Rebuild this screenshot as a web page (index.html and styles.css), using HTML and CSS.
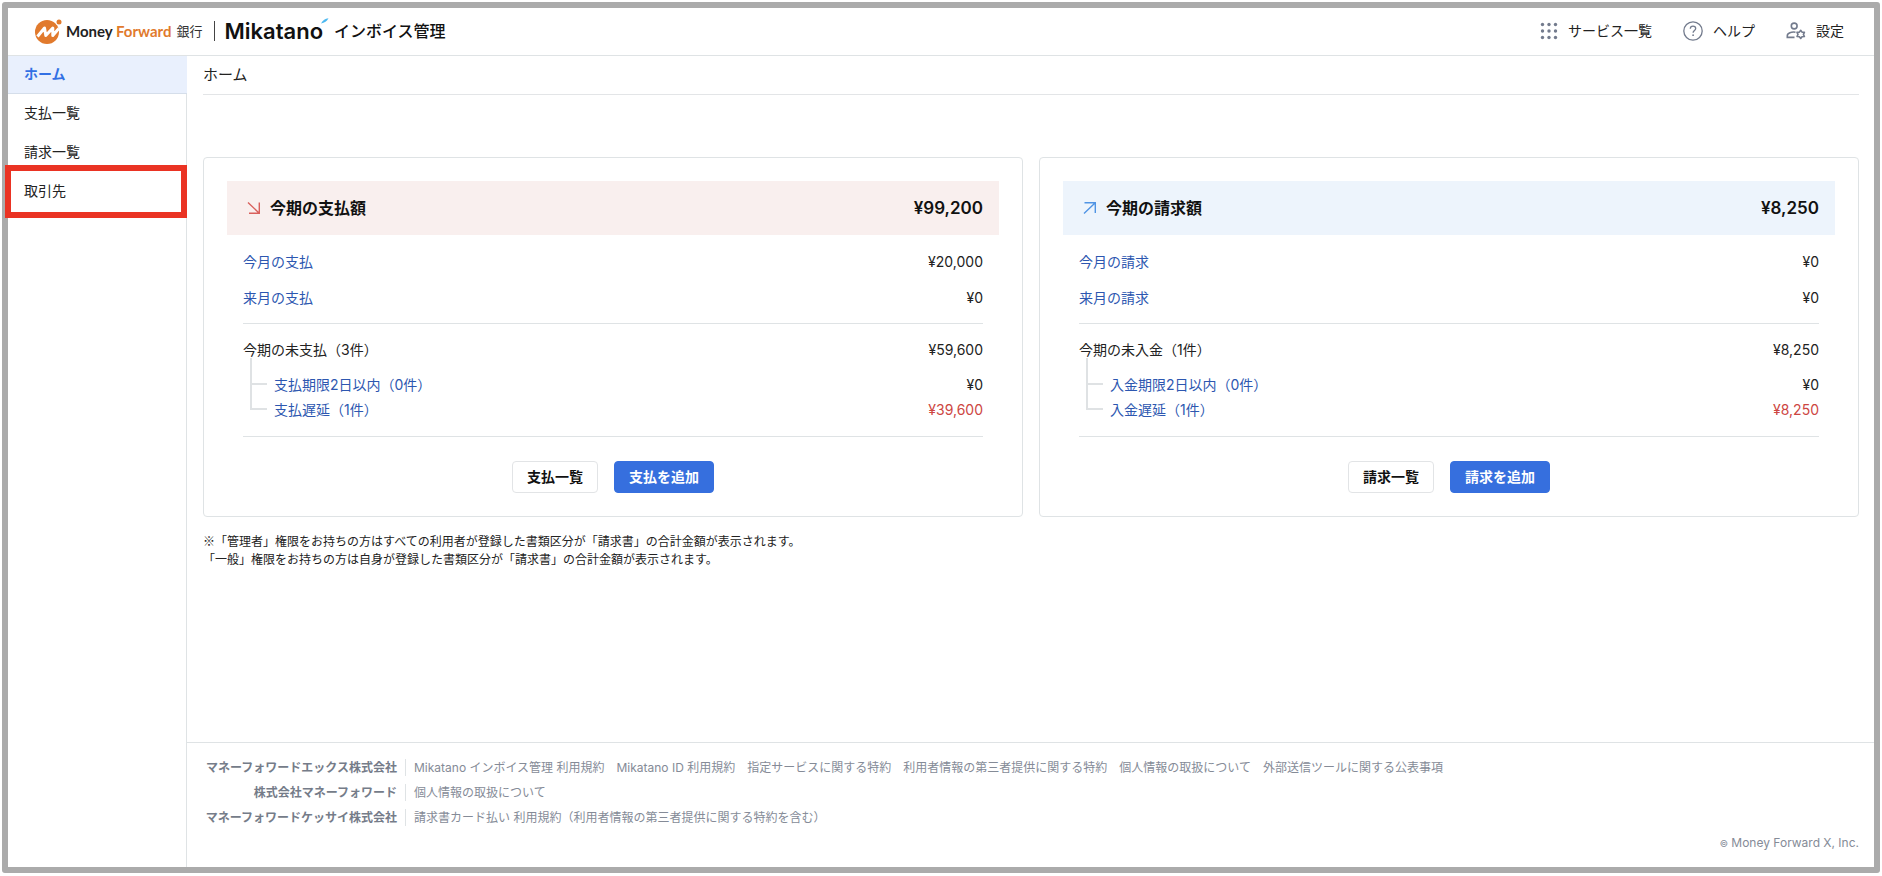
FILE: index.html
```html
<!DOCTYPE html>
<html lang="ja">
<head>
<meta charset="utf-8">
<meta name="viewport" content="width=device-width, initial-scale=1">
<title>ホーム | Mikatano インボイス管理</title>
<link rel="stylesheet" href="styles.css">
</head>
<body>
<div class="frame">
  <header class="header">
    <a class="brand" href="#">
      <svg class="brand-mark" width="28" height="26" viewBox="0 0 28 26" aria-hidden="true">
        <circle cx="13" cy="14" r="12" fill="#e17a2d"/>
        <circle cx="25" cy="4" r="3.4" fill="#fff"/>
        <circle cx="25" cy="4" r="2.5" fill="#e17a2d"/>
        <path d="M3.500 18.500 10.500 10l1.300 7.500 7-7.500v7.500l6-7" fill="none" stroke="#fff" stroke-width="3" stroke-linejoin="round"/>
      </svg>
      <span class="brand-bank"><span class="brand-latin">Money <span class="brand-orange">Forward</span></span> <span class="brand-ginko">銀行</span></span>
      <span class="brand-line"></span>
      <span class="brand-mikatano">Mikatano</span>
      <svg class="brand-tick" width="8" height="6" viewBox="0 0 8 6" aria-hidden="true"><path d="M0 5.500C2 2 4 .5 7.500.2 6 3 3.500 4.800 0 5.500z" fill="#4bb8f0"/></svg>
      <span class="brand-service">インボイス管理</span>
    </a>
    <nav class="tools" aria-label="ツール">
      <button class="tool" type="button">
        <svg width="18" height="18" viewBox="0 0 18 18" fill="#737b8d" aria-hidden="true">
          <circle cx="2.500" cy="2.500" r="1.700"/><circle cx="9" cy="2.500" r="1.700"/><circle cx="15.500" cy="2.500" r="1.700"/>
          <circle cx="2.500" cy="9" r="1.700"/><circle cx="9" cy="9" r="1.700"/><circle cx="15.500" cy="9" r="1.700"/>
          <circle cx="2.500" cy="15.500" r="1.700"/><circle cx="9" cy="15.500" r="1.700"/><circle cx="15.500" cy="15.500" r="1.700"/>
        </svg>
        サービス一覧
      </button>
      <button class="tool" type="button">
        <svg width="20" height="20" viewBox="0 0 20 20" fill="none" stroke="#737b8d" stroke-width="1.300" aria-hidden="true">
          <circle cx="10" cy="10" r="9.200"/>
          <path d="M7.300 7.800C7.300 6 8.500 5.100 10 5.100s2.700.9 2.700 2.400c0 2-2.600 2.100-2.600 4.300"/>
          <circle cx="10.100" cy="14.200" r=".9" fill="#737b8d" stroke="none"/>
        </svg>
        ヘルプ
      </button>
      <button class="tool" type="button">
        <svg width="20" height="18" viewBox="0 0 20 18" fill="none" stroke="#737b8d" stroke-width="1.600" aria-hidden="true">
          <circle cx="8.200" cy="4" r="2.900"/>
          <path d="M9.500 10.200C5.500 9.600 1.300 11 1.300 13.800v1.600h7.200"/>
          <path d="M14.700 8.300l1.300 1.800 2.400.2-1 2.100 1 2.100-2.400.2-1.300 1.800-1.300-1.800-2.400-.2 1-2.100-1-2.100 2.400-.2z" stroke-linejoin="round"/>
        </svg>
        設定
      </button>
    </nav>
  </header>

  <div class="body">
    <nav class="sidebar" aria-label="メニュー">
      <a class="side-item side-active" href="#" aria-current="page">ホーム</a>
      <a class="side-item" href="#">支払一覧</a>
      <a class="side-item" href="#">請求一覧</a>
      <a class="side-item side-marked" href="#">取引先</a>
    </nav>

    <div class="content">
      <main class="main">
        <h1 class="page-title">ホーム</h1>

        <div class="cards">
          <section class="card">
            <div class="card-head card-head-pay">
              <svg width="14" height="14" viewBox="0 0 14 14" fill="none" stroke="#d9605c" stroke-width="1.400" aria-hidden="true"><path d="M1 1.500 12 12M12.300 1.500v10.800H2"/></svg>
              <h2 class="card-title">今期の支払額</h2>
              <span class="card-total">¥99,200</span>
            </div>
            <div class="card-body">
              <div class="group">
                <div class="row"><a class="link" href="#">今月の支払</a><span>¥20,000</span></div>
                <div class="row"><a class="link" href="#">来月の支払</a><span>¥0</span></div>
              </div>
              <div class="group group-open">
                <div class="row-open"><span>今期の未支払（3件）</span><span>¥59,600</span></div>
                <div class="tree">
                  <div class="leaf"><a class="link" href="#">支払期限2日以内（0件）</a><span>¥0</span></div>
                  <div class="leaf"><a class="link" href="#">支払遅延（1件）</a><span class="late">¥39,600</span></div>
                </div>
              </div>
              <div class="actions">
                <button class="btn" type="button">支払一覧</button>
                <button class="btn btn-primary" type="button">支払を追加</button>
              </div>
            </div>
          </section>

          <section class="card">
            <div class="card-head card-head-bill">
              <svg width="14" height="14" viewBox="0 0 14 14" fill="none" stroke="#5094e4" stroke-width="1.400" aria-hidden="true"><path d="M1 12.500 12 2M1.500 1.700h10.800V12"/></svg>
              <h2 class="card-title">今期の請求額</h2>
              <span class="card-total">¥8,250</span>
            </div>
            <div class="card-body">
              <div class="group">
                <div class="row"><a class="link" href="#">今月の請求</a><span>¥0</span></div>
                <div class="row"><a class="link" href="#">来月の請求</a><span>¥0</span></div>
              </div>
              <div class="group group-open">
                <div class="row-open"><span>今期の未入金（1件）</span><span>¥8,250</span></div>
                <div class="tree">
                  <div class="leaf"><a class="link" href="#">入金期限2日以内（0件）</a><span>¥0</span></div>
                  <div class="leaf"><a class="link" href="#">入金遅延（1件）</a><span class="late">¥8,250</span></div>
                </div>
              </div>
              <div class="actions">
                <button class="btn" type="button">請求一覧</button>
                <button class="btn btn-primary" type="button">請求を追加</button>
              </div>
            </div>
          </section>
        </div>

        <p class="notes">※「管理者」権限をお持ちの方はすべての利用者が登録した書類区分が「請求書」の合計金額が表示されます。<br>「一般」権限をお持ちの方は自身が登録した書類区分が「請求書」の合計金額が表示されます。</p>
      </main>

      <footer class="footer">
        <div class="legal">
          <strong class="company">マネーフォワードエックス株式会社</strong>
          <div class="legal-links">
            <a href="#">Mikatano インボイス管理 利用規約</a>
            <a href="#">Mikatano ID 利用規約</a>
            <a href="#">指定サービスに関する特約</a>
            <a href="#">利用者情報の第三者提供に関する特約</a>
            <a href="#">個人情報の取扱について</a>
            <a href="#">外部送信ツールに関する公表事項</a>
          </div>
          <strong class="company">株式会社マネーフォワード</strong>
          <div class="legal-links"><a href="#">個人情報の取扱について</a></div>
          <strong class="company">マネーフォワードケッサイ株式会社</strong>
          <div class="legal-links"><a href="#">請求書カード払い 利用規約（利用者情報の第三者提供に関する特約を含む）</a></div>
        </div>
        <small class="copyright"><span class="copy-sign">©</span> Money Forward X, Inc.</small>
      </footer>
    </div>
  </div>
</div>
</body>
</html>
```
FILE: styles.css
```css
* {
  box-sizing: border-box;
}

body {
  margin: 0;
  background: #fff;
  color: #222;
  font-family: Inter, "Noto Sans CJK JP", sans-serif;
  font-size: 14px;
  line-height: 24px;
}

a {
  color: inherit;
  text-decoration: none;
}

button {
  font: inherit;
  color: inherit;
  cursor: pointer;
}

.frame {
  display: flex;
  flex-direction: column;
  min-height: calc(100vh - 5px);
  margin: 2px 2px 3px;
  border: 6px solid #ababab;
  border-radius: 3px;
}

/* Header */
.header {
  display: flex;
  align-items: center;
  justify-content: space-between;
  height: 48px;
  padding: 0 30px 2px 26px;
  border-bottom: 1px solid #dfe3e5;
}

.brand {
  display: flex;
  align-items: center;
  white-space: nowrap;
}

.brand-mark {
  margin-right: 4px;
}

.brand-bank {
  display: flex;
  align-items: center;
  gap: 5px;
}

.brand-latin {
  font-family: Lato, sans-serif;
  font-size: 15px;
  font-weight: 700;
  color: #222;
}

.brand-orange {
  color: #e17a2d;
}

.brand-ginko {
  font-size: 13px;
  color: #333;
}

.brand-line {
  width: 1px;
  height: 20px;
  margin: 0 10px 0 11px;
  background: #444;
}

.brand-mikatano {
  font-size: 22px;
  font-weight: 600;
  color: #111;
}

.brand-tick {
  align-self: flex-start;
  margin-left: -2px;
}

.brand-service {
  margin-left: 5px;
  font-size: 16px;
  font-weight: 500;
  color: #111;
}

.tools {
  display: flex;
  gap: 31px;
}

.tool {
  display: flex;
  align-items: center;
  gap: 10px;
  padding: 0;
  border: 0;
  background: none;
}

/* Sidebar and content */
.body {
  display: flex;
  flex: 1;
}

.sidebar {
  flex: none;
  width: 179px;
  border-right: 1px solid #dfe3e5;
}

.side-item {
  display: block;
  height: 39px;
  padding: 7px 16px;
}

.side-active {
  height: 38px;
  margin-right: -1px;
  border-bottom: 1px solid #d5deea;
  background: #e9f0fd;
  color: #3270e4;
  font-weight: 700;
  line-height: 22px;
}

.side-marked {
  position: relative;
}

.side-marked::after {
  content: "";
  position: absolute;
  inset: -7px -1px -7px -3px;
  border: 6px solid #ea3323;
}

.content {
  display: flex;
  flex: 1;
  flex-direction: column;
  min-width: 0;
}

.main {
  flex: 1;
  padding: 0 15px 0 16px;
}

.page-title {
  margin: 0 0 62px;
  padding: 7px 0;
  border-bottom: 1px solid #e3e5e7;
  font-size: 15px;
  font-weight: 400;
}

/* Cards */
.cards {
  display: grid;
  grid-template-columns: 1fr 1fr;
  gap: 16px;
}

.card {
  padding: 23px;
  border: 1px solid #dfe3e5;
  border-radius: 4px;
}

.card-head {
  display: flex;
  align-items: center;
  height: 54px;
  padding: 0 16px 0 20px;
}

.card-head-pay {
  background: #f9efee;
}

.card-head-bill {
  background: #edf4fc;
}

.card-title {
  margin: 0 auto 0 9px;
  font-size: 16px;
  font-weight: 700;
  color: #111;
}

.card-total {
  font-size: 17px;
  font-weight: 600;
  color: #111;
}

.card-body {
  padding: 0 16px;
}

.group {
  display: flex;
  flex-direction: column;
  gap: 12px;
  padding: 15px 0 13px;
  border-bottom: 1px solid #dfe3e5;
}

.group-open {
  gap: 0;
  padding: 14px 0;
}

.row,
.row-open,
.leaf {
  display: flex;
  justify-content: space-between;
}

.link {
  color: #2d57b0;
}

.late {
  color: #cd4642;
}

.tree {
  margin-left: 7px;
  padding-top: 10px;
}

.leaf {
  position: relative;
  padding-left: 24px;
  line-height: 25px;
}

/* Connector lines hang from the parent row */
.leaf::before {
  content: "";
  position: absolute;
  left: 0;
  bottom: 12px;
  width: 15px;
  height: 25px;
  border: solid #dfe2e4;
  border-width: 0 0 2px 2px;
}

.actions {
  display: flex;
  justify-content: center;
  gap: 16px;
  padding-top: 24px;
}

.btn {
  height: 32px;
  padding: 0 14px;
  border: 1px solid #e2e4e6;
  border-radius: 4px;
  background: #fff;
  color: #111;
  font-weight: 700;
  line-height: 24px;
}

.btn-primary {
  border-color: #366fde;
  background: #366fde;
  color: #fff;
}

.notes {
  margin: 15px 0;
  font-family: "Noto Sans CJK JP", sans-serif;
  font-size: 12px;
  line-height: 18px;
}

/* Footer */
.footer {
  padding: 16px 15px 15px 16px;
  border-top: 1px solid #dfe3e5;
  color: #858b97;
  font-size: 12px;
  line-height: 17px;
}

.legal {
  display: grid;
  grid-template-columns: 194px 1fr;
  row-gap: 8px;
}

.company {
  text-align: right;
  color: #757c89;
}

.legal-links {
  display: flex;
  flex-wrap: wrap;
  column-gap: 12px;
  margin-left: 8px;
  padding-left: 8px;
  border-left: 1px solid #dfe3e5;
}

.copyright {
  display: block;
  margin-top: 8px;
  font-size: 12px;
  text-align: right;
}

.copy-sign {
  font-size: 9px;
}
```
